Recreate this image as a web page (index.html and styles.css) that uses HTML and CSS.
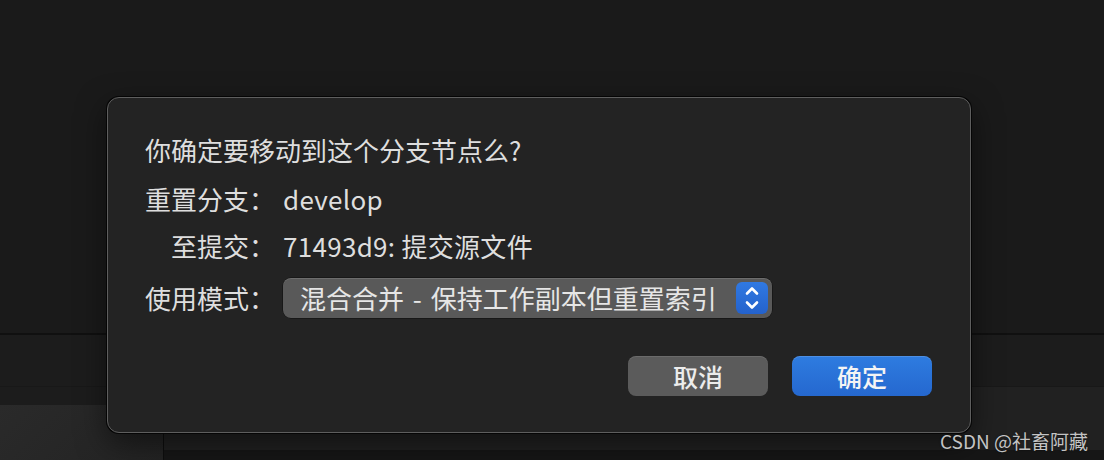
FILE: index.html
```
<!DOCTYPE html>
<html lang="zh-CN">

<head>
    <meta charset="UTF-8">
    <meta name="viewport" content="width=device-width, initial-scale=1.0">
    <link rel="stylesheet" href="styles.css">
    <title>重置分支</title>
</head>

<body>
    <div class="app">
        <div class="app-top"></div>
        <div class="app-band"></div>
        <div class="app-bottom">
            <div class="sidebar">
                <div class="sidebar-head"></div>
                <div class="sidebar-body"></div>
            </div>
            <div class="main">
                <div class="main-body"></div>
                <div class="status-bar"></div>
            </div>
        </div>

        <!-- reset dialog -->
        <div class="dialog">
            <p class="dialog-title">你确定要移动到这个分支节点么?</p>
            <div class="dialog-form">
                <span class="label">重置分支：</span>
                <span class="value">develop</span>

                <span class="label">至提交：</span>
                <span class="value">71493d9: 提交源文件</span>

                <span class="label">使用模式：</span>
                <div class="popup">
                    <span class="popup-text">混合合并 - 保持工作副本但重置索引</span>
                    <span class="stepper">
                        <svg width="32" height="32" viewBox="0 0 32 32">
                            <path d="M11 11.5 L16 6.5 L21 11.5" fill="none" stroke="#fff" stroke-width="2.6" stroke-linecap="round" stroke-linejoin="round" />
                            <path d="M11 20.5 L16 25.5 L21 20.5" fill="none" stroke="#fff" stroke-width="2.6" stroke-linecap="round" stroke-linejoin="round" />
                        </svg>
                    </span>
                </div>
            </div>
            <div class="dialog-actions">
                <button type="button" class="btn btn-cancel">取消</button>
                <button type="button" class="btn btn-ok">确定</button>
            </div>
        </div>

        <div class="watermark">CSDN @社畜阿藏</div>
    </div>
</body>

</html>
```

FILE: styles.css
```
body {
    margin: 0;
    padding: 0;
    background-color: #1a1a1a;
    font-family: "Noto Sans CJK SC", "Noto Sans", sans-serif;
}

.app {
    position: relative;
    width: 1104px;
    height: 460px;
    display: flex;
    flex-direction: column;
    overflow: hidden;
}

.app-top {
    height: 333px;
    background-color: #1a1a1a;
    border-bottom: 2px solid #101010;
}

.app-band {
    height: 51px;
    background-color: #1c1c1c;
    border-bottom: 1px solid #181818;
}

.app-bottom {
    flex: 1;
    display: flex;
}

.sidebar {
    width: 163px;
    display: flex;
    flex-direction: column;
    border-right: 1px solid #0e0e0e;
}

.sidebar-head {
    height: 18px;
    background-color: #1c1c1c;
}

.sidebar-body {
    flex: 1;
    background: linear-gradient(135deg, #2a2a2a, #232323);
}

.main {
    flex: 1;
    display: flex;
    flex-direction: column;
}

.main-body {
    flex: 1;
    background-color: #212121;
}

.status-bar {
    height: 10px;
    background-color: #161616;
}

.dialog {
    position: absolute;
    left: 107px;
    top: 97px;
    width: 864px;
    height: 336px;
    box-sizing: border-box;
    padding: 37px 38px 0 37px;
    background-color: #232323;
    border: 1px solid #5e5e5e;
    border-radius: 12px;
    box-shadow: 0 0 0 1px #050505, 0 10px 30px rgba(0, 0, 0, 0.5);
    color: #dedede;
    display: flex;
    flex-direction: column;
}

.dialog-title {
    margin: 0 0 19px 0;
    font-size: 26px;
    line-height: 30px;
}

.dialog-form {
    display: grid;
    grid-template-columns: 130px auto;
    column-gap: 8px;
    row-gap: 17px;
    align-items: center;
    font-size: 26px;
    line-height: 30px;
}

.label {
    text-align: right;
    white-space: nowrap;
}

.value {
    white-space: nowrap;
    letter-spacing: 0.3px;
}

.popup {
    width: 489px;
    height: 40px;
    box-sizing: border-box;
    padding: 0 4px 0 17px;
    display: flex;
    align-items: center;
    justify-content: space-between;
    background-color: #595959;
    border-radius: 8px;
    box-shadow: inset 0 1px 0 rgba(255, 255, 255, 0.12), 0 0 0 0.5px rgba(0, 0, 0, 0.6);
    color: #e6e6e6;
}

.popup-text {
    word-spacing: 3px;
    white-space: nowrap;
}

.stepper {
    width: 32px;
    height: 32px;
    display: flex;
    border-radius: 6px;
    background: linear-gradient(#3079e2, #2462cc);
}

.dialog-actions {
    margin-top: 38px;
    display: flex;
    justify-content: flex-end;
    gap: 24px;
}

.btn {
    width: 140px;
    height: 40px;
    border: none;
    border-radius: 8px;
    font-family: "Noto Sans CJK SC", sans-serif;
    font-size: 25px;
    font-weight: 500;
    color: #ececec;
    padding: 0;
    cursor: pointer;
}

.btn-cancel {
    background-color: #5b5b5b;
    box-shadow: inset 0 1px 0 rgba(255, 255, 255, 0.1);
}

.btn-ok {
    background: linear-gradient(#2e7ce0, #2568cf);
    box-shadow: inset 0 1px 0 rgba(255, 255, 255, 0.15);
    color: #f4f4f4;
}

.watermark {
    position: absolute;
    right: 16px;
    bottom: 8px;
    font-size: 19px;
    line-height: 22px;
    color: #c4c4c4;
    text-shadow: 0 0 2px rgba(0, 0, 0, 0.6);
}
```
